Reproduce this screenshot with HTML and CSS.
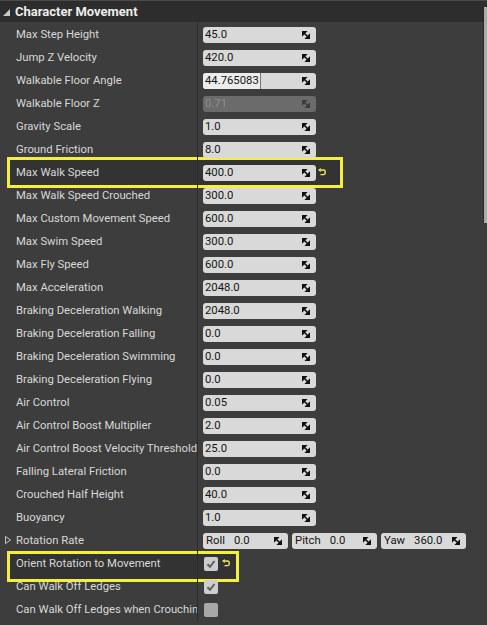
FILE: index.html
```html
<!DOCTYPE html>
<html>
<head>
<meta charset="utf-8">
<link rel="stylesheet" href="styles.css">
</head>
<body>
<div class="panel">
  <div class="header"><svg class="caret" width="7" height="7" viewBox="0 0 7 7"><polygon points="7,0 7,7 0,7" fill="#c8c8c8"/></svg><span>Character Movement</span></div>
  <div class="rows">
    <div class="row"><div class="label">Max Step Height</div><div class="value"><div class="num"><span>45.0</span><svg class="spin" viewBox="0 0 8 8"><polygon points="0,0 4.5,0 0,4.5"/><polygon points="8,8 3.5,8 8,3.5"/><line x1="1" y1="1" x2="7" y2="7"/></svg></div></div></div>
    <div class="row"><div class="label">Jump Z Velocity</div><div class="value"><div class="num"><span>420.0</span><svg class="spin" viewBox="0 0 8 8"><polygon points="0,0 4.5,0 0,4.5"/><polygon points="8,8 3.5,8 8,3.5"/><line x1="1" y1="1" x2="7" y2="7"/></svg></div></div></div>
    <div class="row"><div class="label">Walkable Floor Angle</div><div class="value"><div class="num"><span class="editing">44.765083</span><svg class="spin" viewBox="0 0 8 8"><polygon points="0,0 4.5,0 0,4.5"/><polygon points="8,8 3.5,8 8,3.5"/><line x1="1" y1="1" x2="7" y2="7"/></svg></div></div></div>
    <div class="row"><div class="label">Walkable Floor Z</div><div class="value"><div class="num disabled"><span>0.71</span><svg class="spin" viewBox="0 0 8 8"><polygon points="0,0 4.5,0 0,4.5"/><polygon points="8,8 3.5,8 8,3.5"/><line x1="1" y1="1" x2="7" y2="7"/></svg></div></div></div>
    <div class="row"><div class="label">Gravity Scale</div><div class="value"><div class="num"><span>1.0</span><svg class="spin" viewBox="0 0 8 8"><polygon points="0,0 4.5,0 0,4.5"/><polygon points="8,8 3.5,8 8,3.5"/><line x1="1" y1="1" x2="7" y2="7"/></svg></div></div></div>
    <div class="row"><div class="label">Ground Friction</div><div class="value"><div class="num"><span>8.0</span><svg class="spin" viewBox="0 0 8 8"><polygon points="0,0 4.5,0 0,4.5"/><polygon points="8,8 3.5,8 8,3.5"/><line x1="1" y1="1" x2="7" y2="7"/></svg></div></div></div>
    <div class="row"><div class="mark mark-walk"></div><div class="label">Max Walk Speed</div><div class="value"><div class="num"><span>400.0</span><svg class="spin" viewBox="0 0 8 8"><polygon points="0,0 4.5,0 0,4.5"/><polygon points="8,8 3.5,8 8,3.5"/><line x1="1" y1="1" x2="7" y2="7"/></svg></div><svg class="reset" viewBox="0 0 8 9"><path d="M2.5 2 H5.5 Q7.3 2 7.3 4.3 Q7.3 6.6 5.5 6.6 H2.5" fill="none" stroke="#ecec50" stroke-width="1.3"/><polygon points="0,2 2.8,0 2.8,4" fill="#ecec50"/></svg></div></div>
    <div class="row"><div class="label">Max Walk Speed Crouched</div><div class="value"><div class="num"><span>300.0</span><svg class="spin" viewBox="0 0 8 8"><polygon points="0,0 4.5,0 0,4.5"/><polygon points="8,8 3.5,8 8,3.5"/><line x1="1" y1="1" x2="7" y2="7"/></svg></div></div></div>
    <div class="row"><div class="label">Max Custom Movement Speed</div><div class="value"><div class="num"><span>600.0</span><svg class="spin" viewBox="0 0 8 8"><polygon points="0,0 4.5,0 0,4.5"/><polygon points="8,8 3.5,8 8,3.5"/><line x1="1" y1="1" x2="7" y2="7"/></svg></div></div></div>
    <div class="row"><div class="label">Max Swim Speed</div><div class="value"><div class="num"><span>300.0</span><svg class="spin" viewBox="0 0 8 8"><polygon points="0,0 4.5,0 0,4.5"/><polygon points="8,8 3.5,8 8,3.5"/><line x1="1" y1="1" x2="7" y2="7"/></svg></div></div></div>
    <div class="row"><div class="label">Max Fly Speed</div><div class="value"><div class="num"><span>600.0</span><svg class="spin" viewBox="0 0 8 8"><polygon points="0,0 4.5,0 0,4.5"/><polygon points="8,8 3.5,8 8,3.5"/><line x1="1" y1="1" x2="7" y2="7"/></svg></div></div></div>
    <div class="row"><div class="label">Max Acceleration</div><div class="value"><div class="num"><span>2048.0</span><svg class="spin" viewBox="0 0 8 8"><polygon points="0,0 4.5,0 0,4.5"/><polygon points="8,8 3.5,8 8,3.5"/><line x1="1" y1="1" x2="7" y2="7"/></svg></div></div></div>
    <div class="row"><div class="label">Braking Deceleration Walking</div><div class="value"><div class="num"><span>2048.0</span><svg class="spin" viewBox="0 0 8 8"><polygon points="0,0 4.5,0 0,4.5"/><polygon points="8,8 3.5,8 8,3.5"/><line x1="1" y1="1" x2="7" y2="7"/></svg></div></div></div>
    <div class="row"><div class="label">Braking Deceleration Falling</div><div class="value"><div class="num"><span>0.0</span><svg class="spin" viewBox="0 0 8 8"><polygon points="0,0 4.5,0 0,4.5"/><polygon points="8,8 3.5,8 8,3.5"/><line x1="1" y1="1" x2="7" y2="7"/></svg></div></div></div>
    <div class="row"><div class="label">Braking Deceleration Swimming</div><div class="value"><div class="num"><span>0.0</span><svg class="spin" viewBox="0 0 8 8"><polygon points="0,0 4.5,0 0,4.5"/><polygon points="8,8 3.5,8 8,3.5"/><line x1="1" y1="1" x2="7" y2="7"/></svg></div></div></div>
    <div class="row"><div class="label">Braking Deceleration Flying</div><div class="value"><div class="num"><span>0.0</span><svg class="spin" viewBox="0 0 8 8"><polygon points="0,0 4.5,0 0,4.5"/><polygon points="8,8 3.5,8 8,3.5"/><line x1="1" y1="1" x2="7" y2="7"/></svg></div></div></div>
    <div class="row"><div class="label">Air Control</div><div class="value"><div class="num"><span>0.05</span><svg class="spin" viewBox="0 0 8 8"><polygon points="0,0 4.5,0 0,4.5"/><polygon points="8,8 3.5,8 8,3.5"/><line x1="1" y1="1" x2="7" y2="7"/></svg></div></div></div>
    <div class="row"><div class="label">Air Control Boost Multiplier</div><div class="value"><div class="num"><span>2.0</span><svg class="spin" viewBox="0 0 8 8"><polygon points="0,0 4.5,0 0,4.5"/><polygon points="8,8 3.5,8 8,3.5"/><line x1="1" y1="1" x2="7" y2="7"/></svg></div></div></div>
    <div class="row"><div class="label">Air Control Boost Velocity Threshold</div><div class="value"><div class="num"><span>25.0</span><svg class="spin" viewBox="0 0 8 8"><polygon points="0,0 4.5,0 0,4.5"/><polygon points="8,8 3.5,8 8,3.5"/><line x1="1" y1="1" x2="7" y2="7"/></svg></div></div></div>
    <div class="row"><div class="label">Falling Lateral Friction</div><div class="value"><div class="num"><span>0.0</span><svg class="spin" viewBox="0 0 8 8"><polygon points="0,0 4.5,0 0,4.5"/><polygon points="8,8 3.5,8 8,3.5"/><line x1="1" y1="1" x2="7" y2="7"/></svg></div></div></div>
    <div class="row"><div class="label">Crouched Half Height</div><div class="value"><div class="num"><span>40.0</span><svg class="spin" viewBox="0 0 8 8"><polygon points="0,0 4.5,0 0,4.5"/><polygon points="8,8 3.5,8 8,3.5"/><line x1="1" y1="1" x2="7" y2="7"/></svg></div></div></div>
    <div class="row"><div class="label">Buoyancy</div><div class="value"><div class="num"><span>1.0</span><svg class="spin" viewBox="0 0 8 8"><polygon points="0,0 4.5,0 0,4.5"/><polygon points="8,8 3.5,8 8,3.5"/><line x1="1" y1="1" x2="7" y2="7"/></svg></div></div></div>
    <div class="row"><svg class="expander" width="6" height="8" viewBox="0 0 6 8"><polygon points="0.5,0.5 5.5,4 0.5,7.5" fill="none" stroke="#c8c8c8" stroke-width="1"/></svg><div class="label">Rotation Rate</div><div class="value vec">
      <div class="num comp"><span class="axis">Roll</span><span class="val">0.0</span><svg class="spin" viewBox="0 0 8 8"><polygon points="0,0 4.5,0 0,4.5"/><polygon points="8,8 3.5,8 8,3.5"/><line x1="1" y1="1" x2="7" y2="7"/></svg></div>
      <div class="num comp"><span class="axis">Pitch</span><span class="val">0.0</span><svg class="spin" viewBox="0 0 8 8"><polygon points="0,0 4.5,0 0,4.5"/><polygon points="8,8 3.5,8 8,3.5"/><line x1="1" y1="1" x2="7" y2="7"/></svg></div>
      <div class="num comp"><span class="axis">Yaw</span><span class="val">360.0</span><svg class="spin" viewBox="0 0 8 8"><polygon points="0,0 4.5,0 0,4.5"/><polygon points="8,8 3.5,8 8,3.5"/><line x1="1" y1="1" x2="7" y2="7"/></svg></div>
    </div></div>
    <div class="row"><div class="mark mark-orient"></div><div class="label">Orient Rotation to Movement</div><div class="value"><div class="check"><svg viewBox="0 0 14 14"><polyline points="3.5,7.2 6,9.8 10.5,4" fill="none" stroke="#5e5e5e" stroke-width="2"/></svg></div><svg class="reset" viewBox="0 0 8 9"><path d="M2.5 2 H5.5 Q7.3 2 7.3 4.3 Q7.3 6.6 5.5 6.6 H2.5" fill="none" stroke="#ecec50" stroke-width="1.3"/><polygon points="0,2 2.8,0 2.8,4" fill="#ecec50"/></svg></div></div>
    <div class="row"><div class="label">Can Walk Off Ledges</div><div class="value"><div class="check"><svg viewBox="0 0 14 14"><polyline points="3.5,7.2 6,9.8 10.5,4" fill="none" stroke="#5e5e5e" stroke-width="2"/></svg></div></div></div>
    <div class="row"><div class="label">Can Walk Off Ledges when Crouching</div><div class="value"><div class="check off"></div></div></div>
  </div>
  <div class="scroll-thumb"></div>
</div>
</body>
</html>
```

FILE: styles.css
```css
html, body {
  margin: 0;
  padding: 0;
  background: #3d3d3d;
}
.panel {
  position: relative;
  width: 487px;
  height: 625px;
  overflow: hidden;
  background: #3d3d3d;
  font-family: Roboto, "Liberation Sans", sans-serif;
}
.header {
  height: 22px;
  border-top: 1px solid #4a4a4a;
  background: #2d2d2d;
  display: flex;
  align-items: center;
  color: #ececec;
  font-size: 13px;
  font-weight: bold;
  box-sizing: border-box;
  padding-left: 3px;
}
.header .caret {
  margin-right: 5px;
  margin-top: 1px;
}
.rows {
  display: flex;
  flex-direction: column;
  padding-top: 1px;
}
.row {
  position: relative;
  height: 23px;
  display: flex;
  align-items: center;
}
.label {
  position: relative;
  z-index: 1;
  width: 181px;
  padding-left: 16px;
  height: 23px;
  line-height: 23px;
  font-size: 11.3px;
  color: #d8d8d8;
  white-space: nowrap;
  overflow: hidden;
  border-right: 1px solid #2c2c2c;
}
.expander {
  position: absolute;
  left: 5px;
  top: 7px;
  z-index: 1;
}
.value {
  position: relative;
  z-index: 1;
  display: flex;
  align-items: center;
  padding-left: 5px;
  height: 23px;
}
.num {
  width: 113px;
  height: 16px;
  border-radius: 3px;
  background: #d9d9d9;
  display: flex;
  align-items: center;
  justify-content: space-between;
  box-sizing: border-box;
  padding-left: 2px;
  padding-right: 6px;
  font-size: 11.3px;
  color: #141414;
  overflow: hidden;
}
.num span {
  line-height: 16px;
}
.num .editing {
  background: #ececec;
  border-right: 1px solid #777;
  margin-left: -2px;
  padding-left: 2px;
  padding-right: 1px;
  margin-right: auto;
}
.num.disabled {
  background: #6b6b6b;
  color: #8e8e8e;
}
.num.disabled .spin {
  fill: #3c3c3c;
  stroke: #3c3c3c;
}
.spin {
  width: 8px;
  height: 8px;
  flex: none;
  fill: #111;
  stroke: #111;
  stroke-width: 1.6;
}
.vec {
  gap: 4px;
}
.num.comp {
  width: 85px;
  padding-left: 3px;
  justify-content: flex-start;
}
.comp .axis {
  margin-right: 9px;
}
.comp .val {
  flex: 1;
}
.reset {
  width: 8px;
  height: 9px;
  margin-left: 2px;
}
.check {
  width: 14px;
  height: 14px;
  border-radius: 2px;
  background: #cdcdcd;
  margin-left: 1px;
}
.check svg {
  width: 14px;
  height: 14px;
  display: block;
}
.check.off {
  background: #a8a8a8;
}
.check + .reset {
  margin-left: 4px;
}
.mark {
  position: absolute;
  z-index: 0;
  border: 3px solid #f2ef3e;
  background: #333333;
  box-sizing: border-box;
}
.mark-walk {
  left: 7px;
  top: -4px;
  width: 336px;
  height: 31px;
}
.mark-orient {
  left: 7px;
  top: -1px;
  width: 232px;
  height: 31px;
}
.scroll-thumb {
  position: absolute;
  right: 0;
  top: 7px;
  width: 3px;
  height: 216px;
  background: #ababab;
  border-left: 1px solid #2a2a2a;
}
```
